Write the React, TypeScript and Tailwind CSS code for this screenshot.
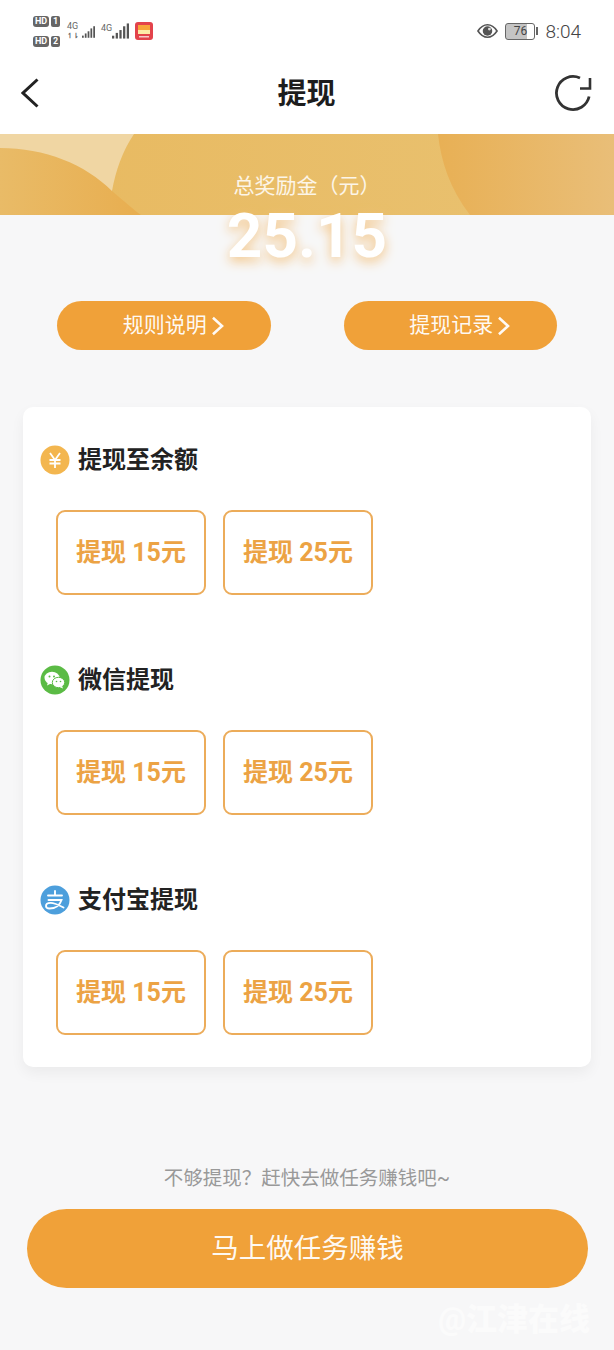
const font = 'font-["Roboto","Noto_Sans_CJK_SC",sans-serif]';

const sections = [
  { title: '提现至余额', icon: 'yuan' },
  { title: '微信提现', icon: 'wechat' },
  { title: '支付宝提现', icon: 'alipay' },
];

function SignalBars({ className }: { className?: string }) {
  return (
    <svg viewBox="0 0 18 18" className={className} fill="#555">
      <rect x="0" y="14" width="2.4" height="3" />
      <rect x="3.9" y="11" width="2.4" height="6" />
      <rect x="7.8" y="8" width="2.4" height="9" />
      <rect x="11.7" y="4" width="2.4" height="13" />
      <rect x="15.6" y="1" width="2.4" height="16" />
    </svg>
  );
}

function HdRow({ n }: { n: string }) {
  return (
    <div className="flex gap-[2px]">
      <span className="w-[16px] rounded-[3px] bg-[#666] text-center text-white">HD</span>
      <span className="w-[9px] rounded-[2px] bg-[#666] text-center text-white">{n}</span>
    </div>
  );
}

function SectionIcon({ type }: { type: string }) {
  if (type === 'yuan') {
    return (
      <svg viewBox="0 0 30 30" className="h-[30px] w-[30px] shrink-0">
        <circle cx="15" cy="15" r="14.5" fill="#f3b64f" />
        <path d="M10 8l5 7 5-7M9.5 15h11M9.5 18.5h11M15 15v8" fill="none" stroke="#fff" strokeWidth="1.8" />
      </svg>
    );
  }
  if (type === 'wechat') {
    return (
      <svg viewBox="0 0 30 30" className="h-[30px] w-[30px] shrink-0">
        <circle cx="15" cy="15" r="14.5" fill="#5bbb45" />
        <ellipse cx="12" cy="13" rx="7.5" ry="6.2" fill="#fff" />
        <path d="M8 17l-1 3.5 4-2z" fill="#fff" />
        <ellipse cx="18.5" cy="17.5" rx="6.2" ry="5.2" fill="#fff" stroke="#5bbb45" strokeWidth="1" />
        <path d="M22 21l1 2.5-3.5-1.5z" fill="#fff" />
        <circle cx="9.5" cy="11.5" r="1" fill="#5bbb45" />
        <circle cx="14" cy="11.5" r="1" fill="#5bbb45" />
        <circle cx="16.5" cy="16.5" r="0.8" fill="#5bbb45" />
        <circle cx="20.5" cy="16.5" r="0.8" fill="#5bbb45" />
      </svg>
    );
  }
  return (
    <svg viewBox="0 0 30 30" className="h-[30px] w-[30px] shrink-0">
      <circle cx="15" cy="15" r="14.5" fill="#4d9fdc" />
      <path
        d="M8 10.5h14M15 6v4.5M8.5 15h13c-1.5 5-6 8.5-12 8.5-2.5 0-3.5-1.2-3.5-2.6 0-2 2-3 4.5-3 3.5 0 8 2 13 4.6"
        fill="none"
        stroke="#fff"
        strokeWidth="1.9"
        strokeLinecap="round"
      />
    </svg>
  );
}

export default function App() {
  return (
    <div className={`relative h-[1350px] overflow-hidden bg-[#f7f7f8] ${font}`}>
      {/* status bar + nav */}
      <div className="h-[134px] bg-white">
        <div className="flex h-[60px] items-center justify-between pl-[33px] pr-[33px] pt-[2px]">
          <div className="flex items-center">
            <div className="flex w-[28px] flex-col gap-[9px] text-[9px] font-bold leading-[11px]">
              <HdRow n="1" />
              <HdRow n="2" />
            </div>
            <div className="ml-[6px] flex items-end">
              <div className="flex w-[15px] flex-col text-[9px] leading-[10px] text-[#666]">
                <span>4G</span>
                <span className="text-[7px] font-bold">↿⇂</span>
              </div>
              <SignalBars className="h-[18px] w-[13px]" />
            </div>
            <div className="ml-[6px] flex items-start">
              <span className="w-[11px] text-[9px] leading-[12px] text-[#666]">4G</span>
              <SignalBars className="h-[18px] w-[17px]" />
            </div>
            <svg viewBox="0 0 18 18" className="ml-[6px] h-[18px] w-[18px]">
              <rect width="18" height="18" rx="3" fill="#e3434b" />
              <rect x="3" y="3" width="12" height="5" fill="#f8a63a" />
              <rect x="3" y="8" width="12" height="4" fill="#fdeaa8" />
              <rect x="4" y="14" width="10" height="1.5" fill="#fff" opacity="0.7" />
            </svg>
          </div>
          <div className="flex items-center text-[#555]">
            <svg viewBox="0 0 22 16" className="h-[16px] w-[21px]">
              <path d="M1 8C4 3.5 7.5 1.5 11 1.5S18 3.5 21 8c-3 4.5-6.5 6.5-10 6.5S4 12.5 1 8Z" fill="none" stroke="#555" strokeWidth="1.7" />
              <circle cx="11" cy="8" r="5" fill="#555" />
              <circle cx="13" cy="6" r="1.5" fill="#ddd" />
            </svg>
            <div className="ml-[7px] flex h-[17px] w-[30px] items-center justify-center overflow-hidden rounded-[3px] border-[1.5px] border-[#666] bg-linear-to-r from-[#c4c4c4] from-75% to-white to-75% text-[12px] leading-none text-[#444]">
              76
            </div>
            <div className="ml-[1px] h-[8px] w-[2px] bg-[#666]" />
            <span className="ml-[7px] text-[19px] font-light leading-none text-[#444]">8:04</span>
          </div>
        </div>
        <div className="flex h-[66px] items-center pl-[21px] pr-[22px]">
          <div className="flex-1">
            <svg viewBox="0 0 18 30" className="h-[30px] w-[18px]" fill="none" stroke="#222" strokeWidth="3">
              <path d="M16.5 1.5 2 15l14.5 13.5" />
            </svg>
          </div>
          <h1 className="mt-[3px] text-[29px] font-bold leading-none text-[#1d1d1d]">提现</h1>
          <div className="flex flex-1 justify-end">
            <svg viewBox="0 0 37 37" className="h-[37px] w-[37px]" fill="none" stroke="#333" strokeWidth="2.8">
              <path d="M25 3.1A16.5 16.5 0 1 0 34.1 21.5" />
              <path d="M25 13.5h10V3" strokeWidth="2.6" />
            </svg>
          </div>
        </div>
      </div>

      {/* hero */}
      <div className="relative h-[273px]">
        <svg viewBox="0 0 614 81" preserveAspectRatio="none" className="absolute left-0 top-0 h-[81px] w-full">
          <defs>
            <linearGradient id="mid" x1="0" x2="1" y1="0" y2="0">
              <stop offset="0" stopColor="#e8b95f" />
              <stop offset="1" stopColor="#e9c272" />
            </linearGradient>
            <linearGradient id="right" x1="0" x2="1" y1="0" y2="0">
              <stop offset="0" stopColor="#e8b055" />
              <stop offset="1" stopColor="#e9be78" />
            </linearGradient>
            <linearGradient id="arc" x1="0" x2="1" y1="0" y2="0">
              <stop offset="0" stopColor="#e9bb67" />
              <stop offset="1" stopColor="#e8ae50" />
            </linearGradient>
          </defs>
          <rect width="614" height="81" fill="url(#mid)" />
          <path d="M0 0H134C122 18 116 36 112 57L0 57Z" fill="#f0d6a3" />
          <path d="M0 14C45 14 85 30 112 57C125 68 134 76 141 81H0Z" fill="url(#arc)" />
          <path d="M438 0H614V81H470C450 55 441 28 438 0Z" fill="url(#right)" />
        </svg>
        <div className="relative flex flex-col items-center">
          <div className="mt-[39px] text-[21px] leading-[26px] text-white/85">总奖励金（元）</div>
          <div className="mt-[-1px] text-[62px] font-bold leading-[76px] text-white [text-shadow:0_4px_12px_#f3c27f]">
            25.15
          </div>
        </div>
        <div className="relative mt-[27px] flex justify-between pl-[57px] pr-[57px]">
          {['规则说明', '提现记录'].map((label) => (
            <button
              key={label}
              className="flex h-[49px] w-[213.5px] items-center justify-center gap-[4px] rounded-full bg-[#f0a139] pl-[19px] text-[21px] text-white/95"
            >
              {label}
              <svg viewBox="0 0 14 22" className="h-[20px] w-[13px]" fill="none" stroke="currentColor" strokeWidth="2.8">
                <path d="M2 2l10 9-10 9" />
              </svg>
            </button>
          ))}
        </div>
      </div>

      {/* withdraw card */}
      <div className="mx-[23px] h-[660px] rounded-[10px] bg-white pl-[17px] pt-[38px] shadow-[0_6px_14px_rgba(0,0,0,0.05)]">
        <div className="flex flex-col gap-[70px]">
          {sections.map((section) => (
            <div key={section.title}>
              <div className="flex h-[30px] items-center gap-[8px]">
                <SectionIcon type={section.icon} />
                <h2 className="text-[24px] font-bold leading-none text-[#222]">{section.title}</h2>
              </div>
              <div className="ml-[16px] mt-[35px] flex gap-[17px]">
                {['提现 15元', '提现 25元'].map((amount) => (
                  <button
                    key={amount}
                    className="h-[85px] w-[150px] rounded-[9px] border-2 border-[#ecac5a] text-[25px] font-bold text-[#eca344]"
                  >
                    {amount}
                  </button>
                ))}
              </div>
            </div>
          ))}
        </div>
      </div>

      {/* bottom */}
      <div className="mt-[100px] text-center text-[19.5px] leading-[24px] text-[#999]">不够提现？赶快去做任务赚钱吧~</div>
      <button className="mx-[27px] mt-[18px] block h-[79px] w-[561px] rounded-full bg-[#f0a139] text-[27.5px] text-white/95">
        马上做任务赚钱
      </button>

      <div className="absolute right-[24px] top-[1302px] text-[31px] font-black leading-[36px] text-white/50">@江津在线</div>
    </div>
  );
}
